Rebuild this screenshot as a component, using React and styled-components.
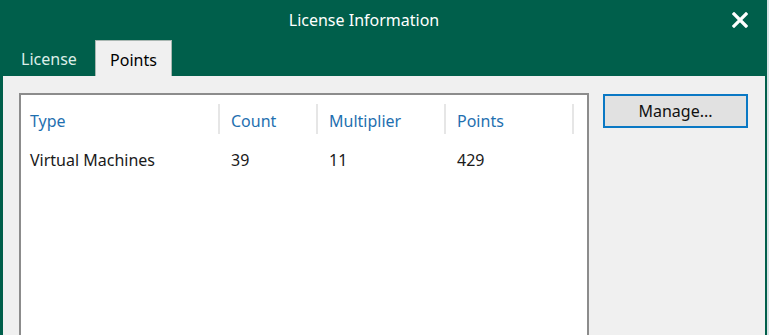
import React from "react";
import styled, { createGlobalStyle } from "styled-components";

const Global = createGlobalStyle`
  html, body { margin: 0; padding: 0; background: #e8eef0; overflow: hidden; }
  body { font-family: "Noto Sans", "Open Sans", sans-serif; }
`;

const GREEN = "#005f4b";

const Page = styled.div`
  display: flex;
  width: 769px;
  height: 335px;
`;

const Window = styled.div`
  width: 762px;
  height: 335px;
  border-left: 3px solid ${GREEN};
  border-right: 2px solid ${GREEN};
  display: flex;
  flex-direction: column;
  background: #f0f0f0;
`;

const TitleBar = styled.div`
  background: ${GREEN};
  height: 40px;
  display: flex;
  align-items: center;
`;

const Title = styled.div`
  flex: 1;
  text-align: center;
  color: #ffffff;
  font-size: 16px;
  padding-left: 8px;
`;

const Close = styled.div`
  width: 46px;
  height: 40px;
  display: flex;
  align-items: center;
  justify-content: center;
  margin-right: 2px;
`;

const TabStrip = styled.div`
  background: ${GREEN};
  height: 36px;
  display: flex;
  align-items: flex-end;
`;

const Tab = styled.div`
  height: 36px;
  box-sizing: border-box;
  width: ${(p) => p.$w}px;
  display: flex;
  align-items: center;
  justify-content: center;
  font-size: 16px;
  padding-top: 2px;
  color: ${(p) => (p.$active ? "#000" : "#dceee8")};
  background: ${(p) => (p.$active ? "#f0f0f0" : "transparent")};
  border: ${(p) => (p.$active ? "1px solid #a9b7b2" : "none")};
  border-bottom: none;
`;

const Body = styled.div`
  flex: 1;
  display: flex;
  gap: 14px;
  padding: 17px 0 0 16px;
`;

const ListBox = styled.div`
  width: 566px;
  background: #fff;
  border: 2px solid #8c8c8c;
  border-bottom: none;
  flex-shrink: 0;
`;

const Row = styled.div`
  display: grid;
  grid-template-columns: 199px 98px 128px 128px;
  height: ${(p) => p.$h}px;
  align-items: ${(p) => (p.$header ? "stretch" : "center")};
  margin-top: ${(p) => p.$mt || 0}px;
`;

const Cell = styled.div`
  display: flex;
  align-items: center;
  padding-left: 11px;
  padding-top: ${(p) => (p.$header ? "3px" : "0")};
  font-size: 16px;
  color: ${(p) => (p.$header ? "#1f70b0" : "#1a1a1a")};
  border-right: ${(p) => (p.$header ? "2px solid #e6e6e6" : "2px solid transparent")};
  &:first-child {
    padding-left: 9px;
  }
`;

const Side = styled.div`
  padding-top: 1px;
`;

const Button = styled.button`
  width: 145px;
  height: 34px;
  box-sizing: border-box;
  border: 2px solid #0a78c4;
  background: #e1e1e1;
  font-family: inherit;
  font-size: 16px;
  color: #111;
  padding: 0;
`;

const Edge = styled.div`
  width: 2px;
  background: #d9e2e4;
`;

const cols = ["Type", "Count", "Multiplier", "Points"];
const data = ["Virtual Machines", "39", "11", "429"];

export default function App() {
  return (
    <>
      <Global />
      <Page>
        <Window>
          <TitleBar>
            <Title>License Information</Title>
            <Close>
              <svg width="16" height="16" viewBox="0 0 16 16">
                <path d="M2 2 L14 14 M14 2 L2 14" stroke="#fff" strokeWidth="3.2" strokeLinecap="square" />
              </svg>
            </Close>
          </TitleBar>
          <TabStrip>
            <Tab $w={92}>License</Tab>
            <Tab $w={77} $active>Points</Tab>
          </TabStrip>
          <Body>
            <ListBox>
              <Row $header $h={30} $mt={9}>
                {cols.map((c) => (
                  <Cell key={c} $header>{c}</Cell>
                ))}
              </Row>
              <Row $h={40} $mt={6}>
                {data.map((c) => (
                  <Cell key={c}>{c}</Cell>
                ))}
              </Row>
            </ListBox>
            <Side>
              <Button>Manage...</Button>
            </Side>
          </Body>
        </Window>
        <Edge />
      </Page>
    </>
  );
}
